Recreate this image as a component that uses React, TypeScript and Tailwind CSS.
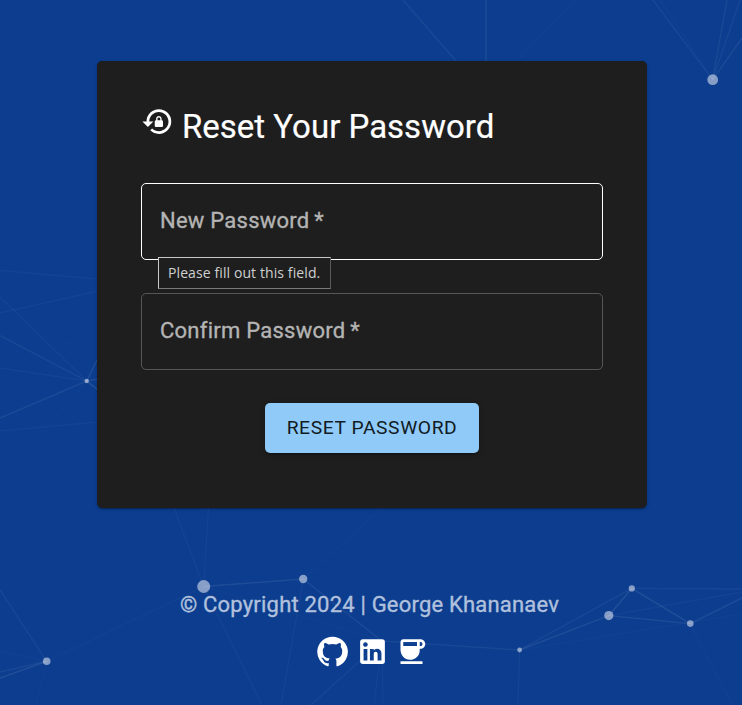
import { MdCoffee, MdLockReset } from "react-icons/md";

type Line = [number, number, number, number, number];

const dots: [number, number, number][] = [
  [712.7, 79.7, 5.4],
  [86.7, 381, 2.2],
  [203.7, 586.5, 6.5],
  [303.2, 579, 4.2],
  [631.8, 588.4, 3.1],
  [608.8, 615.6, 4.6],
  [690.3, 623.6, 3.3],
  [519.6, 650, 2.4],
  [46.7, 661.3, 3.8],
];

const lines: Line[] = [
  [403, 0, 457, 62, 0.06],
  [486, 0, 486, 62, 0.07],
  [394, 0, 380, 16, 0.02],
  [575, 0, 518, 60, 0.015],
  [653, 0, 712.7, 79.7, 0.05],
  [660, 0, 712.7, 79.7, 0.02],
  [727, 0, 712.7, 79.7, 0.06],
  [740, 0, 712.7, 79.7, 0.05],
  [742, 38, 712.7, 79.7, 0.07],
  [0, 270.5, 98, 279, 0.035],
  [0, 313, 98, 291, 0.035],
  [0, 297, 86.7, 381, 0.035],
  [0, 335.5, 86.7, 381, 0.065],
  [0, 368, 86.7, 381, 0.035],
  [0, 418, 86.7, 381, 0.065],
  [0, 431, 98, 422, 0.03],
  [10, 470, 86.7, 381, 0.01],
  [20, 331, 98, 351, 0.01],
  [86.7, 381, 98, 358, 0.09],
  [86.7, 381, 98, 379, 0.09],
  [86.7, 381, 98, 390, 0.11],
  [174, 508, 203.7, 586.5, 0.03],
  [208.5, 508, 203.7, 586.5, 0.03],
  [203.7, 586.5, 303.2, 579, 0.08],
  [203.7, 586.5, 46.7, 661.3, 0.025],
  [203.7, 586.5, 262, 705, 0.035],
  [203.7, 586.5, 382, 641, 0.02],
  [303.2, 579, 281, 705, 0.035],
  [303.2, 579, 382, 641, 0.07],
  [303.2, 579, 292, 560, 0.015],
  [303.2, 579, 380, 510, 0.015],
  [382, 641, 311, 705, 0.045],
  [382, 641, 374, 705, 0.03],
  [382, 641, 383, 705, 0.03],
  [382, 641, 519.6, 650, 0.06],
  [519.6, 650, 518, 705, 0.04],
  [519.6, 650, 631.8, 588.4, 0.06],
  [519.6, 650, 608.8, 615.6, 0.08],
  [519.6, 650, 742, 614, 0.02],
  [608.8, 615.6, 631.8, 588.4, 0.1],
  [608.8, 615.6, 690.3, 623.6, 0.08],
  [608.8, 615.6, 742, 592, 0.035],
  [631.8, 588.4, 690.3, 623.6, 0.09],
  [631.8, 588.4, 742, 589, 0.05],
  [690.3, 623.6, 742, 598, 0.08],
  [690.3, 623.6, 732, 705, 0.02],
  [46.7, 661.3, 0, 590, 0.05],
  [46.7, 661.3, 0, 651, 0.02],
  [46.7, 661.3, 0, 672, 0.06],
  [46.7, 661.3, 0, 678, 0.09],
  [46.7, 661.3, 36, 705, 0.02],
];

function Particles() {
  return (
    <svg className="absolute inset-0 h-full w-full" viewBox="0 0 742 705" aria-hidden="true">
      {lines.map(([x1, y1, x2, y2, o], i) => (
        <line key={i} x1={x1} y1={y1} x2={x2} y2={y2} stroke="#fff" strokeWidth="1.4" strokeOpacity={o} />
      ))}
      {dots.map(([cx, cy, r], i) => (
        <circle key={i} cx={cx} cy={cy} r={r} fill="#fff" fillOpacity="0.5" />
      ))}
    </svg>
  );
}

function GitHubIcon() {
  return (
    <svg className="size-[33px]" viewBox="0 0 24 24" fill="currentColor">
      <path d="M12 1.27a11 11 0 00-3.48 21.46c.55.09.73-.28.73-.55v-1.84c-3.03.64-3.67-1.46-3.67-1.46-.55-1.29-1.28-1.65-1.28-1.65-.92-.65.1-.65.1-.65 1.1 0 1.73 1.1 1.73 1.1.92 1.65 2.57 1.2 3.21.92a2 2 0 01.64-1.47c-2.47-.27-5.04-1.19-5.04-5.5 0-1.1.46-2.1 1.2-2.84a3.76 3.76 0 010-2.93s.91-.28 3.11 1.1c1.8-.49 3.7-.49 5.5 0 2.1-1.38 3.02-1.1 3.02-1.1a3.76 3.76 0 01.1 2.93c.83.74 1.2 1.74 1.2 2.94 0 4.21-2.57 5.13-5.04 5.4.45.37.82.92.82 2.02v3.03c0 .27.1.64.73.55A11 11 0 0012 1.27" />
    </svg>
  );
}

function LinkedInIcon() {
  return (
    <svg className="size-[33px]" viewBox="0 0 24 24" fill="currentColor">
      <path d="M19 3a2 2 0 0 1 2 2v14a2 2 0 0 1-2 2H5a2 2 0 0 1-2-2V5a2 2 0 0 1 2-2h14m-.5 15.5v-5.3a3.26 3.26 0 0 0-3.26-3.26c-.85 0-1.84.52-2.32 1.3v-1.11h-2.79v8.37h2.79v-4.93c0-.77.62-1.4 1.39-1.4a1.4 1.4 0 0 1 1.4 1.4v4.93h2.79M6.88 8.56a1.68 1.68 0 0 0 1.68-1.68c0-.93-.75-1.69-1.68-1.69a1.69 1.69 0 0 0-1.69 1.69c0 .93.76 1.68 1.69 1.68m1.39 9.94v-8.37H5.5v8.37h2.77z" />
    </svg>
  );
}

export default function App() {
  return (
    <div className="relative h-[705px] w-[742px] overflow-hidden bg-[#0c3d8f] font-['Roboto',sans-serif] text-white">
      <Particles />
      <div className="relative flex flex-col items-center pt-[61px]">
        <main className="ml-[2px] flex h-[447px] w-[550px] flex-col rounded-[5px] bg-[#1e1e1e] px-11 pt-11 shadow-[0_3px_1px_-2px_rgba(0,0,0,0.2),0_1px_2px_0_rgba(0,0,0,0.14),0_1px_4px_0_rgba(0,0,0,0.12)]">
          <h1 className="flex h-[45px] items-start text-[33px] leading-[44px] [-webkit-text-stroke:0.2px]">
            <MdLockReset className="size-[33px] [stroke-width:0]" />
            <span className="ml-2 whitespace-nowrap">Reset Your Password</span>
          </h1>
          <div className="relative mt-[33px] flex h-[77px] items-center rounded-[5px] border border-white px-[18px] text-[22px] text-[#b4b4b4]">
            <label className="-mt-[3px] tracking-[0.25px] [-webkit-text-stroke:0.35px]">New Password&thinsp;*</label>
            <div className="absolute top-[73px] left-4 z-10 flex h-8 w-[173px] items-center border border-t-[#c8c8c8] border-r-[#5a5a5a] border-b-[#7a7a7a] border-l-[#c8c8c8] bg-[#1e1e1e] pb-px pl-[9px] font-['Open_Sans',sans-serif] text-[14px] tracking-[0.1px] whitespace-nowrap text-[#d0d0d0]">
              Please fill out this field.
            </div>
          </div>
          <div className="mt-[33px] flex h-[77px] items-center rounded-[5px] border border-[#565656] px-[18px] text-[22px] text-[#b4b4b4]">
            <label className="-mt-[3px] tracking-[0.25px] [-webkit-text-stroke:0.35px]">Confirm Password&thinsp;*</label>
          </div>
          <button className="mt-[33px] flex h-[50px] w-[214px] items-center justify-center self-center rounded-[5px] bg-[#90caf9] text-[19.25px] tracking-[0.6px] whitespace-nowrap text-[#111b22] shadow-[0_3px_1px_-2px_rgba(0,0,0,0.2),0_2px_3px_0_rgba(0,0,0,0.14),0_1px_6px_0_rgba(0,0,0,0.12)]">
            RESET PASSWORD
          </button>
        </main>
        <footer className="mt-[80px] flex flex-col items-center">
          <p className="mr-[3px] text-[22px] leading-[33px] tracking-[0.2px] whitespace-nowrap text-[#b1c1dd] [-webkit-text-stroke:0.35px]">
            © Copyright 2024 | George Khananaev
          </p>
          <div className="mt-[14px] ml-[1px] flex">
            <GitHubIcon />
            <span className="ml-[7px]">
              <LinkedInIcon />
            </span>
            <MdCoffee className="ml-[6px] size-[33px]" />
          </div>
        </footer>
      </div>
    </div>
  );
}
